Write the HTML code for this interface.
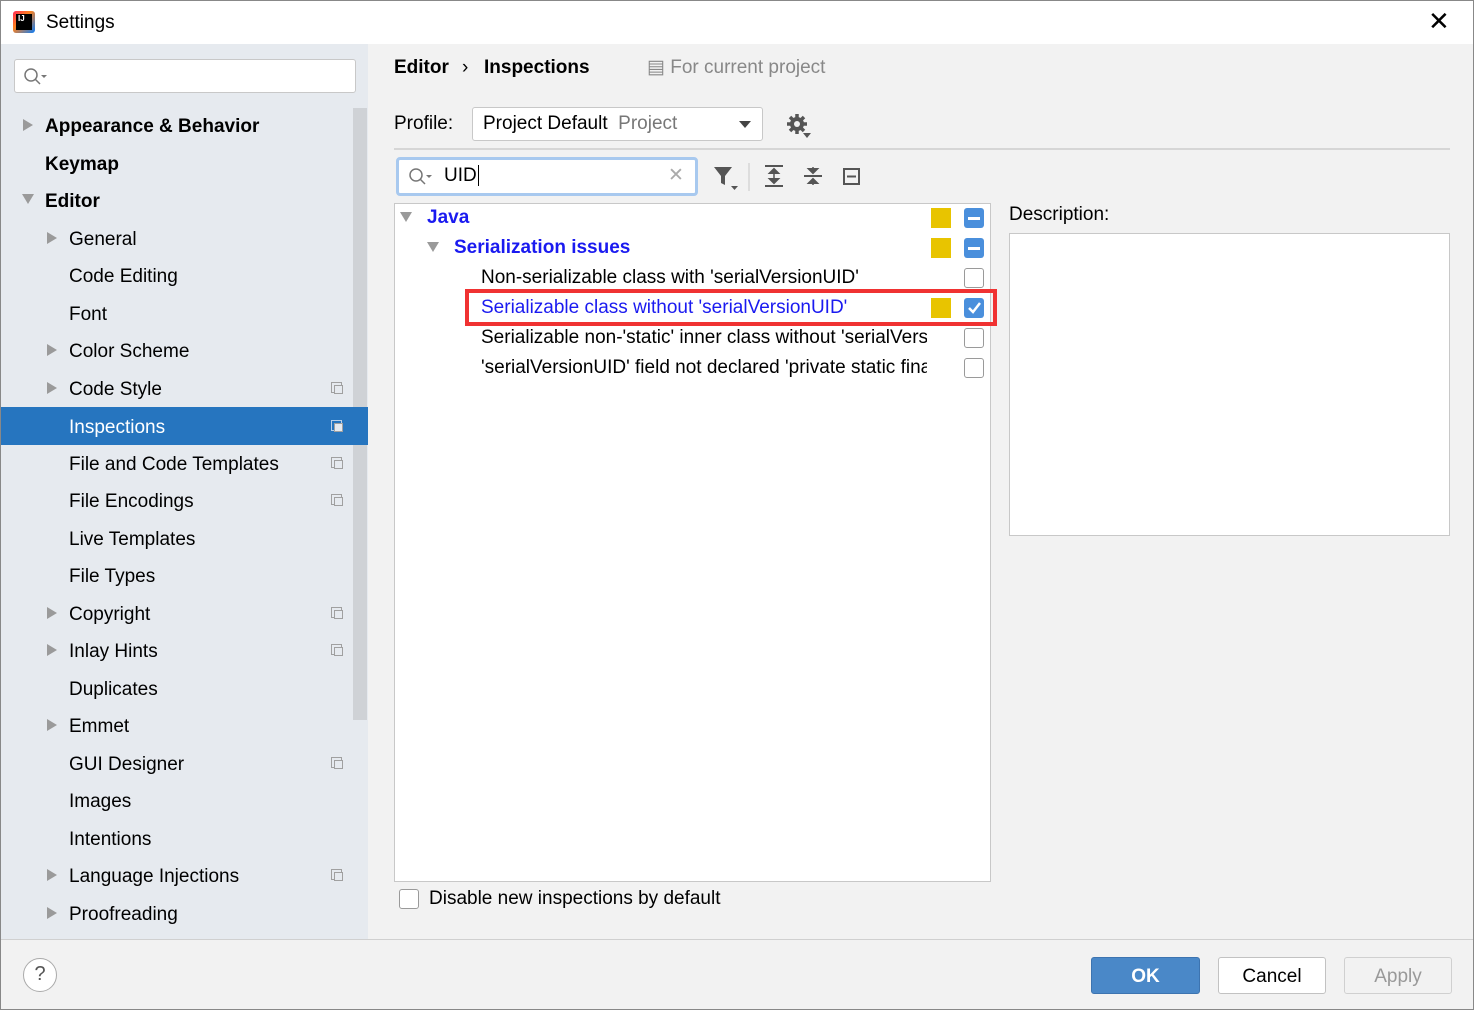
<!DOCTYPE html>
<html><head><meta charset="utf-8"><style>
*{margin:0;padding:0;box-sizing:border-box}
body{width:1474px;height:1010px;overflow:hidden;background:#f2f2f2;font-family:"Liberation Sans",sans-serif;font-size:19px;line-height:1.35;color:#000;position:relative}
.a{position:absolute;white-space:nowrap}
.side{position:absolute;left:1px;top:44px;width:367px;height:895px;background:#e6eaef}
.it{position:absolute;left:0;width:367px;height:37px;line-height:37px}
.it span{position:absolute;top:2px}
.tri{position:absolute;width:0;height:0;border-top:6px solid transparent;border-bottom:6px solid transparent;border-left:10px solid #9a9a9a}
.trd{position:absolute;width:0;height:0;border-left:6px solid transparent;border-right:6px solid transparent;border-top:10px solid #9a9a9a}
.cp{position:absolute;left:330px;top:13px;width:11px;height:11px;border:1px solid #a0a0a0}
.cp:after{content:"";position:absolute;left:2px;top:2px;width:7px;height:7px;border:1px solid #a0a0a0;background:#e6eaef}
.cb{position:absolute;width:20px;height:20px;border:1.5px solid #9a9a9a;border-radius:3px;background:#fff}
.bl{position:absolute;width:20px;height:20px;border-radius:3px;background:#4a8fdc}
.yl{position:absolute;width:20px;height:20px;background:#e8c400}
</style></head><body>
<div class="a" style="left:0;top:0;width:1474px;height:44px;background:#fff"></div>
<div class="a" style="left:13px;top:11px;width:22px;height:22px;background:linear-gradient(135deg,#fe2857,#fc801d 40%,#087cfa);border-radius:3px"></div>
<div class="a" style="left:16px;top:14px;width:16px;height:16px;background:#000;color:#fff;font-size:8px;line-height:1.2;font-weight:bold;padding-left:2px">IJ</div>
<div class="a" style="left:46px;top:10px;font-size:19px">Settings</div>
<div class="a" style="left:1428px;top:4px;font-size:26px;font-weight:300">✕</div>
<div class="side">
<div class="a" style="left:13px;top:15px;width:342px;height:34px;background:#fff;border:1px solid #c8c8c8;border-radius:3px"></div>
<svg class="a" style="left:22px;top:24px" width="26" height="18"><circle cx="8" cy="7" r="6" fill="none" stroke="#777" stroke-width="1.5"/><path d="M12 11l5 5" stroke="#777" stroke-width="1.5"/><path d="M18 7h6l-3 3z" fill="#777"/></svg>
<div class="a" style="left:352px;top:64px;width:14px;height:612px;background:#cfd2d6"></div>
</div>
<div class="a" style="left:1px;top:407px;width:367px;height:38px;background:#2675bf"></div>
<div style="position:absolute;left:1px;top:0">
<div class="it" style="top:106px"><div class="tri" style="left:22px;top:13px"></div><span style="left:44px;font-weight:bold">Appearance &amp; Behavior</span></div>
<div class="it" style="top:144px"><span style="left:44px;font-weight:bold">Keymap</span></div>
<div class="it" style="top:181px"><div class="trd" style="left:21px;top:13px"></div><span style="left:44px;font-weight:bold">Editor</span></div>
<div class="it" style="top:219px"><div class="tri" style="left:46px;top:13px"></div><span style="left:68px">General</span></div>
<div class="it" style="top:256px"><span style="left:68px">Code Editing</span></div>
<div class="it" style="top:294px"><span style="left:68px">Font</span></div>
<div class="it" style="top:331px"><div class="tri" style="left:46px;top:13px"></div><span style="left:68px">Color Scheme</span></div>
<div class="it" style="top:369px"><div class="tri" style="left:46px;top:13px"></div><span style="left:68px">Code Style</span><div class="cp"></div></div>
<div class="it" style="top:407px;color:#fff"><span style="left:68px">Inspections</span><div class="cp" style="border-color:#b8cfe9"></div></div>
<div class="it" style="top:444px"><span style="left:68px">File and Code Templates</span><div class="cp"></div></div>
<div class="it" style="top:481px"><span style="left:68px">File Encodings</span><div class="cp"></div></div>
<div class="it" style="top:519px"><span style="left:68px">Live Templates</span></div>
<div class="it" style="top:556px"><span style="left:68px">File Types</span></div>
<div class="it" style="top:594px"><div class="tri" style="left:46px;top:13px"></div><span style="left:68px">Copyright</span><div class="cp"></div></div>
<div class="it" style="top:631px"><div class="tri" style="left:46px;top:13px"></div><span style="left:68px">Inlay Hints</span><div class="cp"></div></div>
<div class="it" style="top:669px"><span style="left:68px">Duplicates</span></div>
<div class="it" style="top:706px"><div class="tri" style="left:46px;top:13px"></div><span style="left:68px">Emmet</span></div>
<div class="it" style="top:744px"><span style="left:68px">GUI Designer</span><div class="cp"></div></div>
<div class="it" style="top:781px"><span style="left:68px">Images</span></div>
<div class="it" style="top:819px"><span style="left:68px">Intentions</span></div>
<div class="it" style="top:856px"><div class="tri" style="left:46px;top:13px"></div><span style="left:68px">Language Injections</span><div class="cp"></div></div>
<div class="it" style="top:894px"><div class="tri" style="left:46px;top:13px"></div><span style="left:68px">Proofreading</span></div>
</div>
<div class="a" style="left:394px;top:55px;font-weight:bold">Editor</div>
<div class="a" style="left:462px;top:55px">›</div>
<div class="a" style="left:484px;top:55px;font-weight:bold">Inspections</div>
<div class="a" style="left:647px;top:55px;color:#888">▤ For current project</div>
<div class="a" style="left:394px;top:111px">Profile:</div>
<div class="a" style="left:472px;top:107px;width:291px;height:34px;background:#fff;border:1px solid #c8c8c8;border-radius:3px"></div>
<div class="a" style="left:483px;top:111px">Project Default <span style="color:#777">&nbsp;Project</span></div>
<div class="a" style="left:739px;top:121px;border-left:6px solid transparent;border-right:6px solid transparent;border-top:7px solid #444"></div>
<svg class="a" style="left:786px;top:113px" width="26" height="26"><g fill="#555"><circle cx="11" cy="11" r="7"/><g stroke="#555" stroke-width="3.5"><path d="M11 1v20M1 11h20M4 4l14 14M18 4L4 18"/></g></g><circle cx="11" cy="11" r="3" fill="#f2f2f2"/><path d="M17 20h8l-4 5z" fill="#555"/></svg>
<div class="a" style="left:394px;top:148px;width:1056px;height:2px;background:#d6d6d6"></div>
<div class="a" style="left:396px;top:157px;width:302px;height:39px;border:3px solid #a8c9ef;border-radius:4px;background:#fff"></div>
<svg class="a" style="left:408px;top:168px" width="26" height="18"><circle cx="8" cy="7" r="6" fill="none" stroke="#777" stroke-width="1.5"/><path d="M12 11l5 5" stroke="#777" stroke-width="1.5"/><path d="M18 7h6l-3 3z" fill="#777"/></svg>
<div class="a" style="left:444px;top:163px">UID<span style="border-left:1px solid #000;margin-left:1px"></span></div>
<div class="a" style="left:668px;top:163px;color:#aaa">✕</div>
<svg class="a" style="left:712px;top:164px" width="30" height="28"><path d="M2 3h18l-7 9v9l-4 -2v-7z" fill="#555"/><path d="M19 22h7l-3.5 4z" fill="#555"/></svg>
<div class="a" style="left:748px;top:163px;width:2px;height:28px;background:#ddd"></div>
<svg class="a" style="left:762px;top:164px" width="110" height="26"><g stroke="#555" stroke-width="2" fill="#555"><path d="M3 2h18M3 22h18" /><path d="M12 5v14" stroke-width="1.5"/><path d="M8 9l4-4 4 4zM8 15l4 4 4-4z"/><path d="M42 12h18"/><path d="M51 3v6M51 15v6" stroke-width="1.5"/><path d="M47 5l4 4 4-4zM47 19l4-4 4 4z"/><rect x="82" y="5" width="15" height="15" fill="none"/><path d="M85 12.5h9"/></g></svg>
<div class="a" style="left:394px;top:203px;width:597px;height:679px;background:#fff;border:1px solid #c8c8c8"></div>
<div class="trd" style="left:400px;top:212px"></div>
<div class="a" style="left:427px;top:205px;color:#1a1af0;font-weight:bold">Java</div>
<div class="trd" style="left:427px;top:242px"></div>
<div class="a" style="left:454px;top:235px;color:#1a1af0;font-weight:bold">Serialization issues</div>
<div class="a" style="left:481px;top:265px">Non-serializable class with 'serialVersionUID'</div>
<div class="a" style="left:481px;top:295px;color:#1a1af0">Serializable class without 'serialVersionUID'</div>
<div class="a" style="left:481px;top:325px;width:446px;overflow:hidden">Serializable non-'static' inner class without 'serialVersionUID'</div>
<div class="a" style="left:481px;top:355px;width:446px;overflow:hidden">'serialVersionUID' field not declared 'private static final long'</div>
<div class="yl" style="left:931px;top:208px"></div><div class="bl" style="left:964px;top:208px"></div><div class="a" style="left:968px;top:217px;width:12px;height:3px;background:#fff"></div>
<div class="yl" style="left:931px;top:238px"></div><div class="bl" style="left:964px;top:238px"></div><div class="a" style="left:968px;top:247px;width:12px;height:3px;background:#fff"></div>
<div class="cb" style="left:964px;top:268px"></div>
<div class="yl" style="left:931px;top:298px"></div><div class="bl" style="left:964px;top:298px"></div>
<svg class="a" style="left:964px;top:298px" width="20" height="20"><path d="M5 10l4 4 7-9" stroke="#fff" stroke-width="2.5" fill="none"/></svg>
<div class="cb" style="left:964px;top:328px"></div>
<div class="cb" style="left:964px;top:358px"></div>
<div class="a" style="left:465px;top:289px;width:532px;height:37px;border:4px solid #f03232"></div>
<div class="a" style="left:1009px;top:202px">Description:</div>
<div class="a" style="left:1009px;top:233px;width:441px;height:303px;background:#fff;border:1px solid #c8c8c8"></div>
<div class="cb" style="left:399px;top:889px"></div>
<div class="a" style="left:429px;top:886px">Disable new inspections by default</div>
<div class="a" style="left:0;top:939px;width:1474px;height:1px;background:#d0d0d0"></div>
<div class="a" style="left:23px;top:958px;width:34px;height:34px;border:1.5px solid #aaa;border-radius:50%;background:#fff;text-align:center;line-height:31px;font-size:20px;color:#555">?</div>
<div class="a" style="left:1091px;top:957px;width:109px;height:37px;background:#4a88c8;border:1px solid #3d74b0;border-radius:3px;color:#fff;font-weight:bold;text-align:center;line-height:37px">OK</div>
<div class="a" style="left:1218px;top:957px;width:108px;height:37px;background:#fff;border:1px solid #c2c2c2;border-radius:3px;text-align:center;line-height:37px">Cancel</div>
<div class="a" style="left:1344px;top:957px;width:108px;height:37px;background:#f2f2f2;border:1px solid #d0d0d0;border-radius:3px;text-align:center;line-height:37px;color:#999">Apply</div>
<div class="a" style="left:0;top:0;width:1474px;height:1010px;border:1px solid #888;pointer-events:none"></div>
</body></html>
